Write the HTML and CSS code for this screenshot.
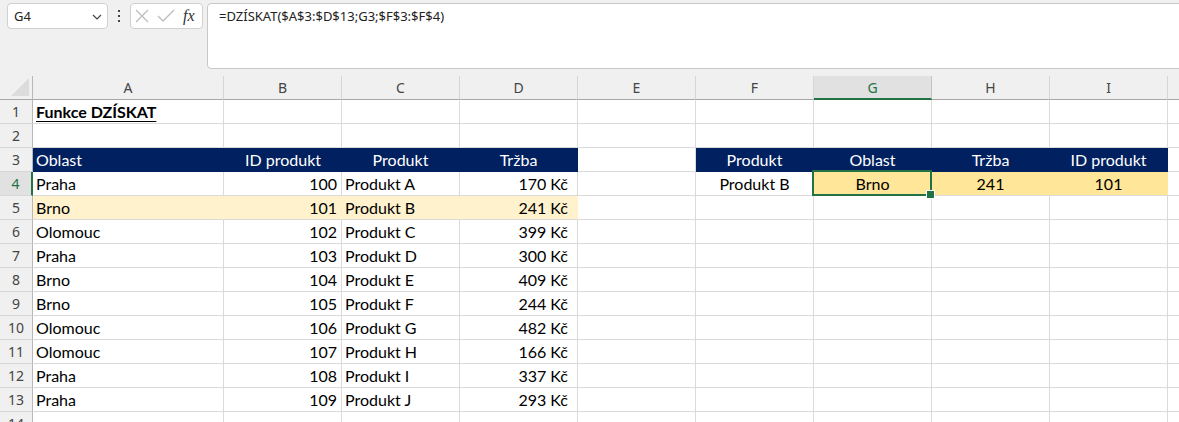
FILE: index.html
```html
<!DOCTYPE html>
<html lang="cs">
<head>
<meta charset="utf-8">
<title>Funkce DZÍSKAT</title>
<link rel="stylesheet" href="styles.css">
</head>
<body>
<div class="app">
  <div class="toolbar">
    <div class="namebox">
      <span class="name">G4</span>
      <svg class="chev" width="10" height="6" viewBox="0 0 10 6"><path d="M1 1 L5 5 L9 1" fill="none" stroke="#444" stroke-width="1.2"/></svg>
    </div>
    <div class="dots"><span></span><span></span><span></span></div>
    <div class="fxbox">
      <svg width="16" height="16" viewBox="0 0 16 16"><path d="M2 2 L14 14 M14 2 L2 14" stroke="#bdbdbd" stroke-width="1.3" fill="none"/></svg>
      <svg width="18" height="16" viewBox="0 0 18 16"><path d="M1 8 L6 13 L17 2" stroke="#bdbdbd" stroke-width="1.3" fill="none"/></svg>
      <span class="fx">fx</span>
    </div>
    <div class="formula">=DZÍSKAT($A$3:$D$13;G3;$F$3:$F$4)</div>
  </div>

  <div class="sheet">
    <div class="corner"><svg width="18" height="18" viewBox="0 0 18 18"><path d="M18 0 L18 18 L0 18 Z" fill="#dcdcdc"/></svg></div>
    <div class="ch">A</div><div class="ch">B</div><div class="ch">C</div><div class="ch">D</div><div class="ch">E</div><div class="ch">F</div><div class="ch ch-sel">G</div><div class="ch">H</div><div class="ch">I</div><div class="ch"></div>

    <div class="rh">1</div><div class="c title">Funkce DZÍSKAT</div><div class="c"></div><div class="c"></div><div class="c"></div><div class="c"></div><div class="c"></div><div class="c"></div><div class="c"></div><div class="c"></div><div class="c"></div>

    <div class="rh">2</div><div class="c"></div><div class="c"></div><div class="c"></div><div class="c"></div><div class="c"></div><div class="c"></div><div class="c"></div><div class="c"></div><div class="c"></div><div class="c"></div>

    <div class="rh">3</div><div class="c hd">Oblast</div><div class="c hd r indent">ID produkt</div><div class="c hd ctr">Produkt</div><div class="c hd ctr">Tržba</div><div class="c"></div><div class="c hd ctr">Produkt</div><div class="c hd ctr">Oblast</div><div class="c hd ctr">Tržba</div><div class="c hd ctr">ID produkt</div><div class="c"></div>

    <div class="rh rh-sel">4</div><div class="c">Praha</div><div class="c r">100</div><div class="c">Produkt A</div><div class="c r kc">170 Kč</div><div class="c"></div><div class="c ctr">Produkt B</div><div class="c ctr gold active">Brno</div><div class="c ctr gold">241</div><div class="c ctr gold">101</div><div class="c"></div>

    <div class="rh">5</div><div class="c hl">Brno</div><div class="c hl r">101</div><div class="c hl">Produkt B</div><div class="c hl r kc">241 Kč</div><div class="c"></div><div class="c"></div><div class="c"></div><div class="c"></div><div class="c"></div><div class="c"></div>

    <div class="rh">6</div><div class="c">Olomouc</div><div class="c r">102</div><div class="c">Produkt C</div><div class="c r kc">399 Kč</div><div class="c"></div><div class="c"></div><div class="c"></div><div class="c"></div><div class="c"></div><div class="c"></div>

    <div class="rh">7</div><div class="c">Praha</div><div class="c r">103</div><div class="c">Produkt D</div><div class="c r kc">300 Kč</div><div class="c"></div><div class="c"></div><div class="c"></div><div class="c"></div><div class="c"></div><div class="c"></div>

    <div class="rh">8</div><div class="c">Brno</div><div class="c r">104</div><div class="c">Produkt E</div><div class="c r kc">409 Kč</div><div class="c"></div><div class="c"></div><div class="c"></div><div class="c"></div><div class="c"></div><div class="c"></div>

    <div class="rh">9</div><div class="c">Brno</div><div class="c r">105</div><div class="c">Produkt F</div><div class="c r kc">244 Kč</div><div class="c"></div><div class="c"></div><div class="c"></div><div class="c"></div><div class="c"></div><div class="c"></div>

    <div class="rh">10</div><div class="c">Olomouc</div><div class="c r">106</div><div class="c">Produkt G</div><div class="c r kc">482 Kč</div><div class="c"></div><div class="c"></div><div class="c"></div><div class="c"></div><div class="c"></div><div class="c"></div>

    <div class="rh">11</div><div class="c">Olomouc</div><div class="c r">107</div><div class="c">Produkt H</div><div class="c r kc">166 Kč</div><div class="c"></div><div class="c"></div><div class="c"></div><div class="c"></div><div class="c"></div><div class="c"></div>

    <div class="rh">12</div><div class="c">Praha</div><div class="c r">108</div><div class="c">Produkt I</div><div class="c r kc">337 Kč</div><div class="c"></div><div class="c"></div><div class="c"></div><div class="c"></div><div class="c"></div><div class="c"></div>

    <div class="rh">13</div><div class="c">Praha</div><div class="c r">109</div><div class="c">Produkt J</div><div class="c r kc">293 Kč</div><div class="c"></div><div class="c"></div><div class="c"></div><div class="c"></div><div class="c"></div><div class="c"></div>

    <div class="rh">14</div><div class="c"></div><div class="c"></div><div class="c"></div><div class="c"></div><div class="c"></div><div class="c"></div><div class="c"></div><div class="c"></div><div class="c"></div><div class="c"></div>
  </div>
</div>
</body>
</html>
```

FILE: styles.css
```css
* { box-sizing: border-box; }
html, body { margin: 0; padding: 0; }
body {
  width: 1179px;
  height: 422px;
  overflow: hidden;
  background: #f0f0f0;
  font-family: "Noto Sans", "Open Sans", sans-serif;
}
.app { width: 1179px; overflow: hidden; }

/* toolbar */
.toolbar {
  height: 76px;
  display: flex;
  align-items: flex-start;
  padding-top: 3px;
  padding-left: 7px;
}
.namebox {
  width: 101px;
  height: 26px;
  background: #fff;
  border: 1px solid #d0d0d0;
  border-radius: 4px;
  display: flex;
  align-items: center;
  justify-content: space-between;
  padding: 0 5px 0 6px;
}
.name { font-size: 13px; color: #222; }
.chev { margin-top: 1px; }
.dots {
  width: 22px;
  height: 26px;
  display: flex;
  flex-direction: column;
  align-items: center;
  justify-content: center;
  gap: 3px;
}
.dots span { width: 2px; height: 2px; background: #444; display: block; }
.fxbox {
  width: 73px;
  height: 26px;
  background: #fff;
  border: 1px solid #d0d0d0;
  border-radius: 4px;
  display: flex;
  align-items: center;
  gap: 7px;
  padding-left: 3px;
}
.fx {
  font-family: "Liberation Serif", serif;
  font-style: italic;
  font-size: 16px;
  color: #333;
  margin-left: 1px;
}
.formula {
  margin-left: 4px;
  flex: 1;
  height: 66px;
  margin-right: -10px;
  background: #fff;
  border: 1px solid #c8c8c8;
  border-radius: 4px;
  padding: 3px 0 0 11px;
  font-size: 13px;
  color: #222;
}

/* sheet */
.sheet {
  display: grid;
  grid-template-columns: 33px 191px 118px 118px 118px 118px 118px 118px 118px 118px 118px;
  grid-template-rows: 24px repeat(14, 24px);
  background: #fff;
  font-family: "Lato", "Liberation Sans", sans-serif;
  font-size: 16px;
  color: #000;
}
.corner {
  background: #f0f0f0;
  border-right: 1px solid #b8b8b8;
  border-bottom: 1px solid #a8a8a8;
  display: flex;
  align-items: flex-end;
  justify-content: flex-end;
  padding: 0 3px 3px 0;
}
.ch {
  background: #f0f0f0;
  border-right: 1px solid #d6d6d6;
  border-bottom: 1px solid #a8a8a8;
  font-family: "Noto Sans", sans-serif;
  font-size: 14px;
  color: #444;
  text-align: center;
  line-height: 23px;
}
.ch-sel {
  background: #e1e1e1;
  color: #217346;
  border-bottom: 2px solid #217346;
  border-right-color: #c4c4c4;
}
.rh {
  background: #f0f0f0;
  border-right: 1px solid #b8b8b8;
  border-bottom: 1px solid #d6d6d6;
  font-family: "Noto Sans", sans-serif;
  font-size: 14px;
  color: #444;
  text-align: center;
  line-height: 23px;
}
.rh-sel {
  background: #e1e1e1;
  color: #217346;
  border-right: 2px solid #217346;
}
.c {
  border-right: 1px solid #dadada;
  border-bottom: 1px solid #dadada;
  padding: 0 3px;
  line-height: 24px;
  white-space: nowrap;
  overflow: visible;
}
.title { font-weight: 700; text-decoration: underline; text-underline-offset: 3px; }
.r { text-align: right; padding-right: 4px; }
.indent { padding-right: 20px; }
.ctr { text-align: center; }
.kc { padding-right: 9px; }
.hd {
  background: #002060;
  color: #fff;
  border-color: #002060;
}
.hl { background: #fff2cc; border-right-color: #fff2cc; }
.gold { background: #ffe699; border-right-color: #ffe699; }
.active { position: relative; }
.active::after {
  content: "";
  position: absolute;
  left: -2px;
  top: -2px;
  right: -1px;
  bottom: -1px;
  border: 2px solid #217346;
}
.active::before {
  content: "";
  position: absolute;
  right: -4px;
  bottom: -4px;
  width: 7px;
  height: 7px;
  background: #217346;
  border: 1px solid #fff;
  z-index: 2;
}
```
